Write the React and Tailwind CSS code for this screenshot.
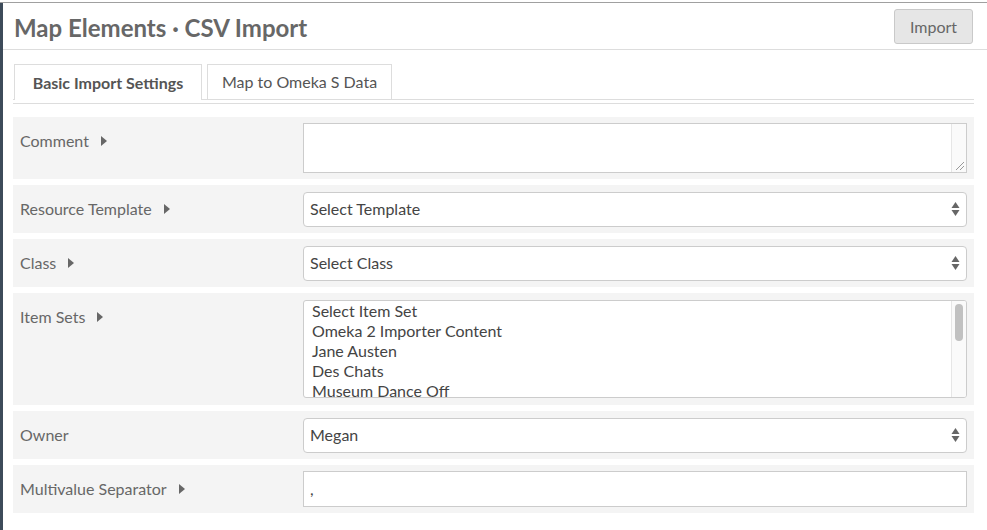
import React from 'react';

const Caret = () => (
  <svg width="6" height="10" viewBox="0 0 6 10" className="ml-[12px] shrink-0">
    <path d="M0 0 L6 5 L0 10 Z" fill="#676767" />
  </svg>
);

const Arrows = () => (
  <svg width="9" height="16" viewBox="0 0 9 16" className="shrink-0">
    <path d="M4.5 1 L8.5 7 L0.5 7 Z" fill="#666" />
    <path d="M0.5 9 L8.5 9 L4.5 15 Z" fill="#666" />
  </svg>
);

const Label = ({ text, caret = true }) => (
  <div className="flex h-[48px] w-[290px] shrink-0 items-center pl-[7px] text-[16px] text-[#676767]">
    <span>{text}</span>
    {caret && <Caret />}
  </div>
);

const SelectBox = ({ value }) => (
  <div className="flex h-[35px] flex-1 items-center justify-between rounded-[4px] border border-[#ccc] bg-white pl-[6px] pr-[6px] text-[16px] text-[#444]">
    <span>{value}</span>
    <Arrows />
  </div>
);

const Row = ({ children, className = '' }) => (
  <div className={`flex bg-[#f4f4f4] pr-[7px] ${className}`}>{children}</div>
);

const itemSets = ['Select Item Set', 'Omeka 2 Importer Content', 'Jane Austen', 'Des Chats', 'Museum Dance Off'];

export default function App() {
  return (
    <div className="h-[530px] w-[987px] overflow-hidden bg-white pt-[2px] font-['Lato',sans-serif] text-[#676767]">
      <div className="border-t border-[#a0a0a0]" />
      <div className="flex h-[527px]">
        <div className="w-[3px] shrink-0 bg-[#3d4b5a]" />
        <div className="flex-1">
          {/* Header */}
          <div className="flex h-[47px] items-center justify-between border-b border-[#ddd] pl-[11px] pr-[14px]">
            <h1 className="mt-[3px] text-[24px] font-bold leading-none">Map Elements · CSV Import</h1>
            <button className="mt-[1px] h-[35px] w-[79px] rounded-[3px] border border-[#c9c9c9] bg-[#e6e6e6] text-[16px] text-[#676767]">
              Import
            </button>
          </div>

          {/* Tabs */}
          <div className="pl-[10px] pr-[13px] pt-[14px]">
            <div className="flex gap-[5px] border-b border-[#ddd] pl-[1px]">
              <div className="-mb-px flex h-[36px] w-[188px] items-center justify-center border border-b-0 border-[#ddd] bg-white text-[16px] font-bold text-[#555]">
                Basic Import Settings
              </div>
              <div className="flex h-[35px] w-[185px] items-center justify-center border border-b-0 border-[#ddd] text-[16px] text-[#555]">
                Map to Omeka S Data
              </div>
            </div>
            <div className="mt-[3px] border-t border-[#ddd]" />

            {/* Fields */}
            <div className="mt-[13px] flex flex-col gap-[6px]">
              <Row className="h-[62px]">
                <Label text="Comment" />
                <div className="my-[6px] flex h-[50px] flex-1 border border-[#ccc] bg-white">
                  <div className="flex-1" />
                  <div className="flex w-[15px] flex-col justify-end border-l border-[#e6e6e6] bg-[#fafafa]">
                    <svg width="14" height="14" viewBox="0 0 14 14">
                      <path d="M4 12 L12 4 M8 12 L12 8" stroke="#999" strokeWidth="1" />
                    </svg>
                  </div>
                </div>
              </Row>

              <Row className="h-[48px] items-center">
                <Label text="Resource Template" />
                <SelectBox value="Select Template" />
              </Row>

              <Row className="h-[48px] items-center">
                <Label text="Class" />
                <SelectBox value="Select Class" />
              </Row>

              <Row className="h-[112px]">
                <Label text="Item Sets" />
                <div className="mt-[7px] flex h-[98px] flex-1 overflow-hidden rounded-[3px] border border-[#ccc] bg-white">
                  <div className="flex-1 pl-[8px] text-[16px] leading-[20px] text-[#444]">
                    {itemSets.map((s) => (
                      <div key={s}>{s}</div>
                    ))}
                  </div>
                  <div className="w-[15px] border-l border-[#e6e6e6] bg-[#fafafa] px-[3px] pt-[3px]">
                    <div className="h-[37px] rounded-full bg-[#c1c1c1]" />
                  </div>
                </div>
              </Row>

              <Row className="h-[48px] items-center">
                <Label text="Owner" caret={false} />
                <SelectBox value="Megan" />
              </Row>

              <Row className="h-[48px] items-center">
                <Label text="Multivalue Separator" />
                <div className="flex h-[36px] flex-1 items-center border border-[#ccc] bg-white pl-[6px] text-[16px] text-[#444]">
                  ,
                </div>
              </Row>
            </div>
          </div>
        </div>
      </div>
    </div>
  );
}
